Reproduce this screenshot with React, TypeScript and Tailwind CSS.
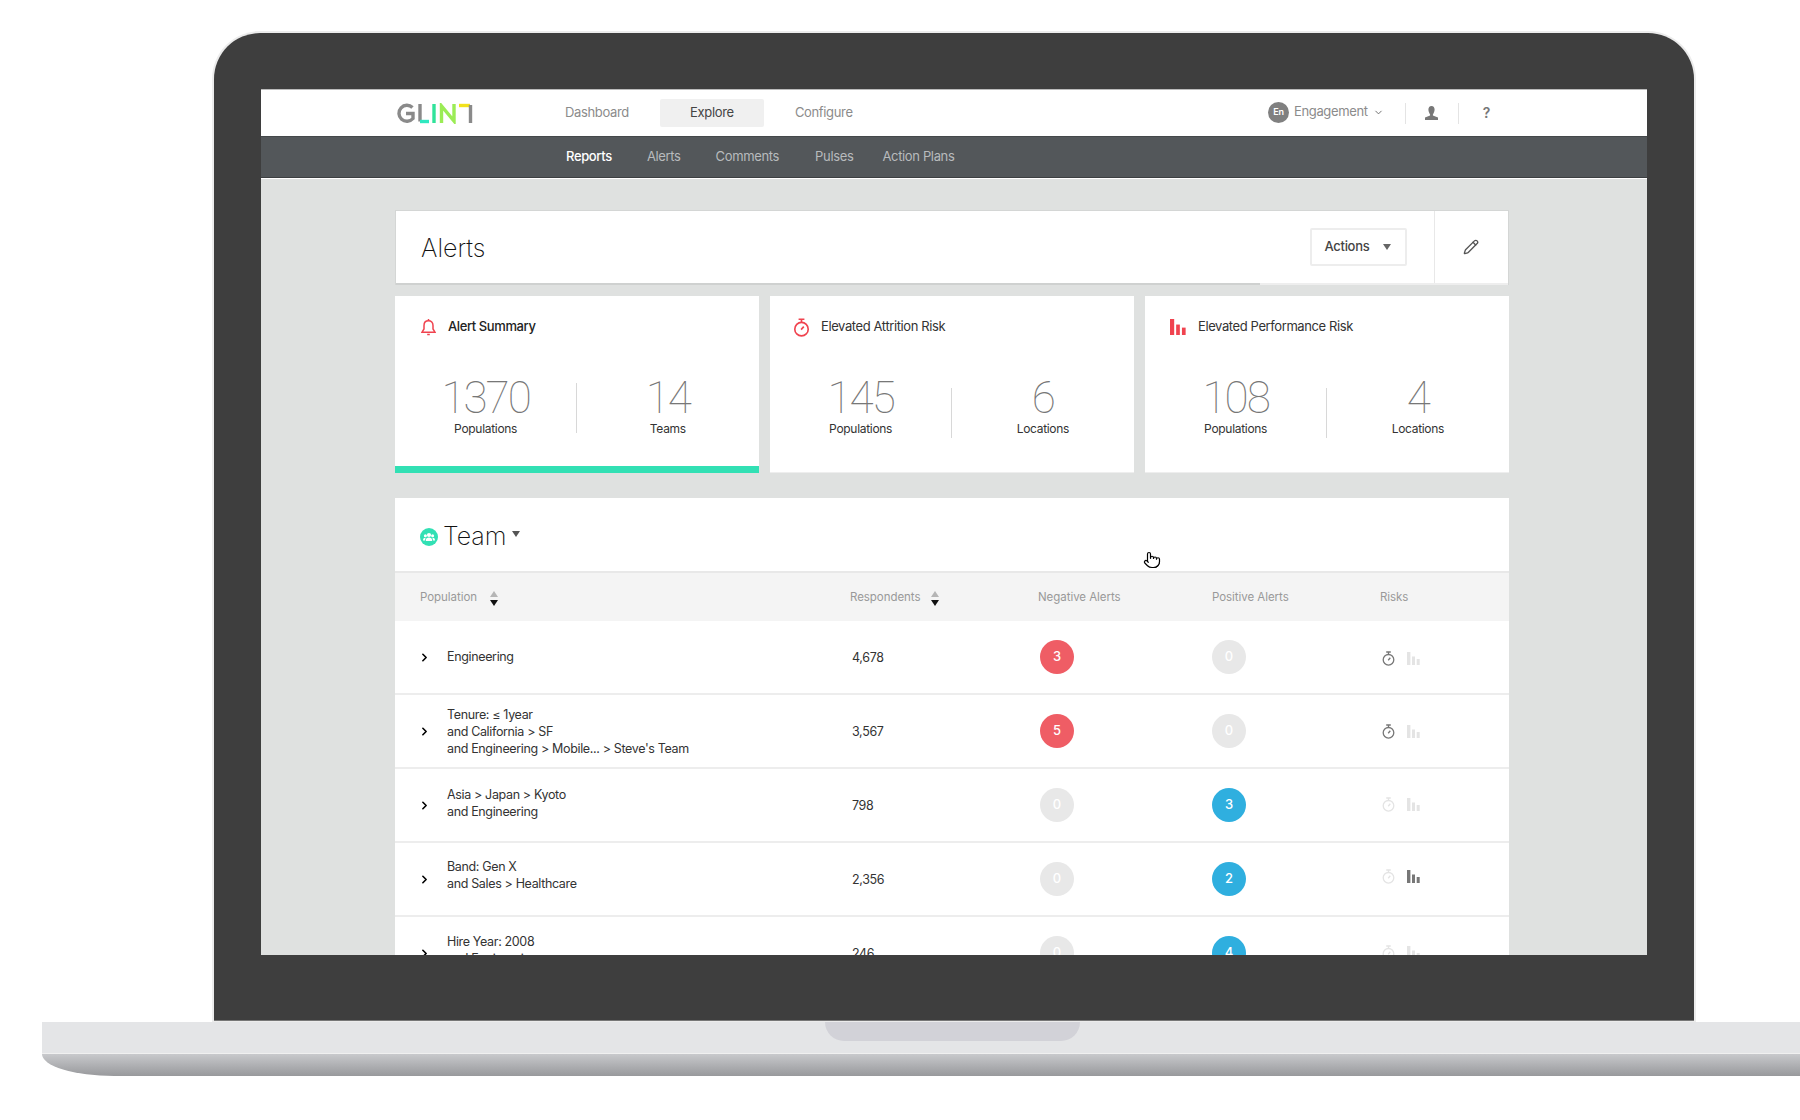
import { ChevronDown, ChevronRight, Pencil, Pointer } from "lucide-react";

const font = "font-['Inter','Liberation_Sans',sans-serif]";

function Logo() {
    return (
        <svg width="78" height="21" viewBox="0 0 78 21" fill="none" strokeWidth="3.4">
            <path d="M17.5 4.5A8 8 0 1 0 18 15.5V10.5H11" stroke="#8a8a8a" />
            <path d="M25 1V18.5" stroke="#8a8a8a" />
            <path d="M25 18.5H34" stroke="#2fe8c0" />
            <path d="M39 1V20" stroke="#30e39a" />
            <path d="M46.5 20V3L59 18V1" stroke="#9bec55" />
            <path d="M64 2.5H75" stroke="#f2e21c" />
            <path d="M75.5 2V20" stroke="#8a8a8a" />
        </svg>
    );
}

function Bell({ color = "#f0434f" }: { color?: string }) {
    return (
        <svg width="15" height="18" viewBox="0 0 15 18" fill="none" stroke={color} strokeWidth="1.5">
            <path d="M1 14.2H14L12 11V7.5C12 4.6 10.2 2.8 7.5 2.8S3 4.6 3 7.5V11Z" />
            <path d="M7.5 1V2.8M6.2 16.4H8.8" />
        </svg>
    );
}

function Stopwatch({ color, size = 13 }: { color: string; size?: number }) {
    return (
        <svg width={size} height={size + 2} viewBox="0 0 13 15" fill="none" stroke={color} strokeWidth="1.3">
            <circle cx="6.5" cy="8.8" r="5.3" />
            <path d="M4.2 1H8.8M6.5 1V3.4M6.2 9.2L8.3 6.8" />
        </svg>
    );
}

function Bars({ color, size = 13 }: { color: string; size?: number }) {
    return (
        <svg width={size} height={size} viewBox="0 0 13 13" fill={color}>
            <rect x="0" y="0" width="3.4" height="13" />
            <rect x="5" y="4.5" width="3" height="8.5" />
            <rect x="9.7" y="7" width="3" height="6" />
        </svg>
    );
}

function SortArrows() {
    return (
        <svg width="8" height="15" viewBox="0 0 8 15">
            <path d="M4 0L8 6H0Z" fill="#b5b5b5" />
            <path d="M4 15L0 9H8Z" fill="#111" />
        </svg>
    );
}

function UserSolid() {
    return (
        <svg width="13" height="14" viewBox="0 0 13 14" fill="#777">
            <path d="M6.5 0C8.6 0 9.6 1.6 9.6 3.6 9.6 5.6 8.6 7.6 7.9 8.4V9.6L13 11.6V14H0V11.6L5.1 9.6V8.4C4.4 7.6 3.4 5.6 3.4 3.6 3.4 1.6 4.4 0 6.5 0Z" />
        </svg>
    );
}

function TeamIcon() {
    return (
        <svg width="18" height="18" viewBox="0 0 18 18" className="mt-[5px]">
            <circle cx="9" cy="9" r="9" fill="#32e0b4" />
            <circle cx="9" cy="7" r="2.1" fill="#fff" />
            <circle cx="5.4" cy="7.8" r="1.5" fill="#fff" />
            <circle cx="12.6" cy="7.8" r="1.5" fill="#fff" />
            <path d="M5.8 13C5.8 10.6 7 9.6 9 9.6S12.2 10.6 12.2 13ZM3 12.4C3 10.4 3.9 9.7 5.6 9.7L5 12.4ZM15 12.4C15 10.4 14.1 9.7 12.4 9.7L13 12.4Z" fill="#fff" />
        </svg>
    );
}

const summaries = [
    {
        pl: "pl-[26px]",
        gap: "gap-[12px]",
        icon: <Bell />,
        title: "Alert Summary",
        titleClass: "font-medium text-[#222]",
        left: ["1370", "Populations"],
        right: ["14", "Teams"],
        dividerClass: "mt-[7px]",
        active: true,
    },
    {
        pl: "pl-[23px]",
        gap: "gap-[11px]",
        icon: <Stopwatch color="#f0434f" size={17} />,
        title: "Elevated Attrition Risk",
        titleClass: "text-[#333]",
        left: ["145", "Populations"],
        right: ["6", "Locations"],
        dividerClass: "mt-[12px]",
        active: false,
    },
    {
        pl: "pl-[25px]",
        gap: "gap-[12px]",
        icon: <Bars color="#f0434f" size={16} />,
        title: "Elevated Performance Risk",
        titleClass: "text-[#333]",
        left: ["108", "Populations"],
        right: ["4", "Locations"],
        dividerClass: "mt-[12px]",
        active: false,
    },
];

const rows = [
    {
        lines: ["Engineering"],
        count: "4,678",
        negative: 3,
        positive: 0,
        watchOn: true,
        barsOn: false,
        riskClass: "pt-[3px]",
        textClass: "pb-[2px]",
    },
    {
        lines: ["Tenure: ≤ 1year", "and California > SF", "and Engineering > Mobile... > Steve's Team"],
        count: "3,567",
        negative: 5,
        positive: 0,
        watchOn: true,
        barsOn: false,
        riskClass: "pt-[1px]",
        textClass: "",
    },
    {
        lines: ["Asia > Japan > Kyoto", "and Engineering"],
        count: "798",
        negative: 0,
        positive: 3,
        watchOn: false,
        barsOn: false,
        riskClass: "pb-[2px]",
        textClass: "pb-[5px]",
    },
    {
        lines: ["Band: Gen X", "and Sales > Healthcare"],
        count: "2,356",
        negative: 0,
        positive: 2,
        watchOn: false,
        barsOn: true,
        riskClass: "pb-[6px]",
        textClass: "pb-[8px]",
    },
    {
        lines: ["Hire Year: 2008", "and Engineering"],
        count: "246",
        negative: 0,
        positive: 4,
        watchOn: false,
        barsOn: false,
        riskClass: "pb-[2px]",
        textClass: "pb-[7px]",
    },
];

function Badge({ value, tone }: { value: number; tone: "red" | "blue" }) {
    let color = "bg-[#e8e8e8]";
    if (value > 0) color = tone === "red" ? "bg-[#ef5d65]" : "bg-[#2fafdf]";
    return (
        <span className={`flex h-[34px] w-[34px] items-center justify-center rounded-full text-[13px] font-medium text-white ${color}`}>
            {value}
        </span>
    );
}

function Stat({ value, label }: { value: string; label: string }) {
    return (
        <div className="flex flex-1 flex-col items-center">
            <span className="font-['Roboto',sans-serif] text-[44px] font-thin leading-[44px] tracking-[-2px] text-[#777]">{value}</span>
            <span className="mt-[1px] text-[12px] leading-[16px] tracking-[-0.3px] text-[#333]">{label}</span>
        </div>
    );
}

function TableRow({ row }: { row: (typeof rows)[number] }) {
    return (
        <div className="grid h-[74px] shrink-0 grid-cols-[430px_188px_174px_168px_1fr] items-center border-b-2 border-[#ededed] pl-[25px]">
            <div className="flex items-center">
                <ChevronRight className="ml-[-2px] mr-[16px] h-[13px] w-[13px] shrink-0 text-black" strokeWidth={3} />
                <div className={`text-[12.5px] leading-[17px] tracking-[-0.35px] text-[#333] ${row.textClass}`}>
                    {row.lines.map((line) => (
                        <div key={line}>{line}</div>
                    ))}
                </div>
            </div>
            <span className="pl-[2px] pt-[2px] text-[12.5px] tracking-[-0.35px] text-[#333]">{row.count}</span>
            <div className="pl-[2px]">
                <Badge value={row.negative} tone="red" />
            </div>
            <Badge value={row.positive} tone="blue" />
            <div className={`flex items-center gap-[12px] pl-[2px] ${row.riskClass}`}>
                <Stopwatch color={row.watchOn ? "#777" : "#e4e4e4"} />
                <Bars color={row.barsOn ? "#777" : "#e4e4e4"} />
            </div>
        </div>
    );
}

export default function App() {
    return (
        <div className={`h-[1120px] w-[1800px] overflow-hidden bg-white pt-[33px] ${font}`}>
            {/* lid */}
            <div className="ml-[214px] h-[988px] w-[1480px] rounded-t-[46px] border-b border-[#777] bg-[#3e3e3e] px-[47px] pt-[56px] shadow-[0_0_0_2px_#ececec]">
                <div className="flex h-[866px] flex-col overflow-hidden bg-[#dfe1e0]">
                    {/* top nav */}
                    <header className="flex h-[47px] shrink-0 items-center border-t border-[#bbb] bg-white pl-[134px]">
                        <Logo />
                        <nav className="ml-[92px] flex items-center text-[13px] tracking-[-0.35px] text-[#8b8b8b]">
                            <span>Dashboard</span>
                            <span className="ml-[31px] flex h-[28px] w-[104px] items-center justify-center rounded-[2px] bg-[#f0f0f0] text-[#444]">Explore</span>
                            <span className="ml-[31px]">Configure</span>
                        </nav>
                        <div className="ml-auto flex items-center pr-[157px] text-[13px] tracking-[-0.35px] text-[#8b8b8b]">
                            <span className="mb-[2px] flex h-[21px] w-[21px] items-center justify-center rounded-full bg-[#808080] text-[9px] font-semibold text-white">En</span>
                            <span className="mb-[2px] ml-[5px]">Engagement</span>
                            <ChevronDown className="mb-[2px] ml-[5px] h-[11px] w-[11px] text-[#666]" />
                            <span className="ml-[21px] h-[21px] w-px bg-[#e4e4e4]" />
                            <span className="ml-[19px] flex">
                                <UserSolid />
                            </span>
                            <span className="ml-[20px] h-[21px] w-px bg-[#e4e4e4]" />
                            <span className="mb-[1px] ml-[24px] text-[14px] font-semibold text-[#777]">?</span>
                        </div>
                    </header>

                    {/* sub nav */}
                    <div className="flex h-[42px] shrink-0 items-center gap-[35px] border-y border-b-[#3c3f41] border-t-[#44484a] bg-[#53575a] pl-[305px] text-[13px] tracking-[-0.35px] text-[#b8bbbd] shadow-[0_1px_0_#fff]">
                        <span className="font-medium text-white">Reports</span>
                        <span>Alerts</span>
                        <span className="mr-[1px]">Comments</span>
                        <span className="mr-[-6px]">Pulses</span>
                        <span>Action Plans</span>
                    </div>

                    <main className="flex flex-col pl-[134px] pr-[138.5px] pt-[32px]">
                        {/* page title */}
                        <section className="h-[75px] shrink-0 border-x border-t border-[#d4d6d5] bg-white">
                            <div className="flex h-[72px] items-stretch">
                                <h1 className="flex flex-1 items-center pl-[25px] pt-[4px] text-[25px] font-extralight text-[#111]">Alerts</h1>
                                <div className="flex items-center pr-[27px]">
                                    <button className="flex h-[38px] w-[97px] items-center rounded-[2px] border-2 border-[#ededed] pl-[13px] text-[13px] font-medium tracking-[-0.3px] text-[#444]">
                                        Actions
                                        <span className="ml-[14px] border-x-[4px] border-t-[6px] border-x-transparent border-t-[#666]" />
                                    </button>
                                </div>
                                <div className="flex w-[74px] items-center justify-center border-l border-[#e8e8e8]">
                                    <Pencil className="h-[16px] w-[16px] text-[#555]" />
                                </div>
                            </div>
                            <div className="flex h-[2px]">
                                <div className="w-[864px] bg-[#cfd1d0]" />
                                <div className="flex-1 bg-[#eeeeee]" />
                            </div>
                        </section>

                        {/* summary cards */}
                        <section className="mt-[11px] grid h-[177px] shrink-0 grid-cols-3 gap-[11.5px]">
                            {summaries.map((card) => (
                                <div key={card.title} className="flex flex-col bg-white">
                                    <div className={`mt-[22px] flex h-[18px] items-center text-[13px] tracking-[-0.4px] ${card.pl} ${card.gap} ${card.titleClass}`}>
                                        {card.icon}
                                        <span>{card.title}</span>
                                    </div>
                                    <div className="mt-[40px] flex items-start">
                                        <Stat value={card.left[0]} label={card.left[1]} />
                                        <span className={`h-[50px] w-px bg-[#d8d8d8] ${card.dividerClass}`} />
                                        <Stat value={card.right[0]} label={card.right[1]} />
                                    </div>
                                    {card.active ? (
                                        <div className="mt-auto h-[7px] bg-[#32e0b4]" />
                                    ) : (
                                        <div className="mt-auto h-px bg-[#eeeeee]" />
                                    )}
                                </div>
                            ))}
                        </section>

                        {/* team table */}
                        <section className="relative mt-[25px] flex flex-col bg-white">
                            <div className="flex h-[75px] shrink-0 items-center border-b-2 border-[#e8e8e8] pl-[25px]">
                                <TeamIcon />
                                <span className="ml-[5px] pt-[5px] text-[25px] font-extralight text-[#111]">Team</span>
                                <span className="mb-[1px] ml-[5px] border-x-[4px] border-t-[6px] border-x-transparent border-t-[#555]" />
                            </div>
                            <div className="grid h-[48px] shrink-0 grid-cols-[430px_188px_174px_168px_1fr] items-center bg-[#f4f4f4] pl-[25px] pt-[2px] text-[11.5px] tracking-[-0.05px] text-[#999]">
                                <div className="flex items-center gap-[13px]">
                                    Population
                                    <SortArrows />
                                </div>
                                <div className="flex items-center gap-[11px]">
                                    Respondents
                                    <SortArrows />
                                </div>
                                <span>Negative Alerts</span>
                                <span>Positive Alerts</span>
                                <span>Risks</span>
                            </div>
                            {rows.map((row) => (
                                <TableRow key={row.count} row={row} />
                            ))}
                            <Pointer className="absolute left-[748px] top-[53px] h-[18px] w-[18px] fill-white text-black" strokeWidth={1.6} />
                        </section>
                    </main>
                </div>
            </div>

            {/* base */}
            <div className="ml-[42px] mt-px h-[31px] bg-[#e4e5e7]">
                <div className="ml-[783px] h-[19px] w-[255px] rounded-b-[26px] bg-[#d2d2d8]" />
            </div>
            <div className="ml-[42px] h-[23px] rounded-bl-[72px_22px] border-t border-[#f0f0f0] bg-gradient-to-b from-[#c8c9cc] to-[#98999c]" />
        </div>
    );
}
